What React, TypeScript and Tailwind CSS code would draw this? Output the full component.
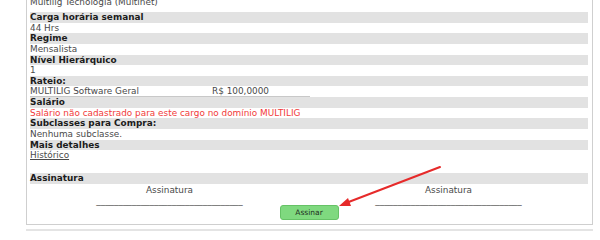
import React from 'react';

const Label: React.FC<{ children: React.ReactNode }> = ({ children }) => (
  <div className="h-[10.65px] bg-[#e2e2e2] font-bold text-[#1c1c1c] leading-[10.65px]">{children}</div>
);

const Value: React.FC<{ children: React.ReactNode; className?: string }> = ({ children, className = '' }) => (
  <div className={`h-[10.65px] leading-[10.65px] text-[#4a4a4a] ${className}`}>{children}</div>
);

export default function App() {
  return (
    <div
      className="relative w-[600px] h-[240px] overflow-hidden bg-white text-[8.9px]"
      style={{ fontFamily: '"DejaVu Sans", Verdana, sans-serif' }}
    >
      <div className="ml-[26px] w-[567px] -mt-[6px] border border-t-0 border-[#cfcfcf] pl-[3px] pr-[4px] pb-[4px]">
        <Value className="pt-[3px] !h-[18px]">Multilig Tecnologia (Multinet)</Value>
        <Label>Carga horária semanal</Label>
        <Value>44 Hrs</Value>
        <Label>Regime</Label>
        <Value>Mensalista</Value>
        <Label>Nível Hierárquico</Label>
        <Value>1</Value>
        <Label>Rateio:</Label>
        <div className="flex w-[280px] h-[10.65px] leading-[10.65px] text-[#4a4a4a] border-b border-[#c8c8c8]">
          <span className="w-[182px]">MULTILIG Software Geral</span>
          <span>R$ 100,0000</span>
        </div>
        <Label>Salário</Label>
        <Value className="!text-[#f23a3a]">Salário não cadastrado para este cargo no domínio MULTILIG</Value>
        <Label>Subclasses para Compra:</Label>
        <Value>Nenhuma subclasse.</Value>
        <Label>Mais detalhes</Label>
        <Value className="underline">Histórico</Value>
        <div className="h-[12.5px]" />
        <Label>Assinatura</Label>
        <div className="grid grid-cols-2 text-[#4a4a4a] text-center leading-[10.5px] pt-[1px]">
          <div>
            <div>Assinatura</div>
            <div>_________________________________</div>
          </div>
          <div>
            <div>Assinatura</div>
            <div>_________________________________</div>
          </div>
        </div>
        <div className="flex justify-center -mt-[1px]">
          <button className="w-[59px] h-[15px] rounded-[3px] bg-[#7fd97f] border border-[#66c266] text-[7.5px] text-[#1f2f1f] leading-[13px]">
            Assinar
          </button>
        </div>
      </div>
      <div className="ml-[26px] w-[567px] mt-[4px] border-t-2 border-[#e4e4e4]" />
      <svg className="absolute left-0 top-0" width="600" height="240" viewBox="0 0 600 240">
        <line x1="440" y1="167" x2="346" y2="203" stroke="#e62a2a" strokeWidth="2" strokeLinecap="round" />
        <path d="M339 206 L348 198 L351 206 Z" fill="#e62a2a" />
      </svg>
    </div>
  );
}
